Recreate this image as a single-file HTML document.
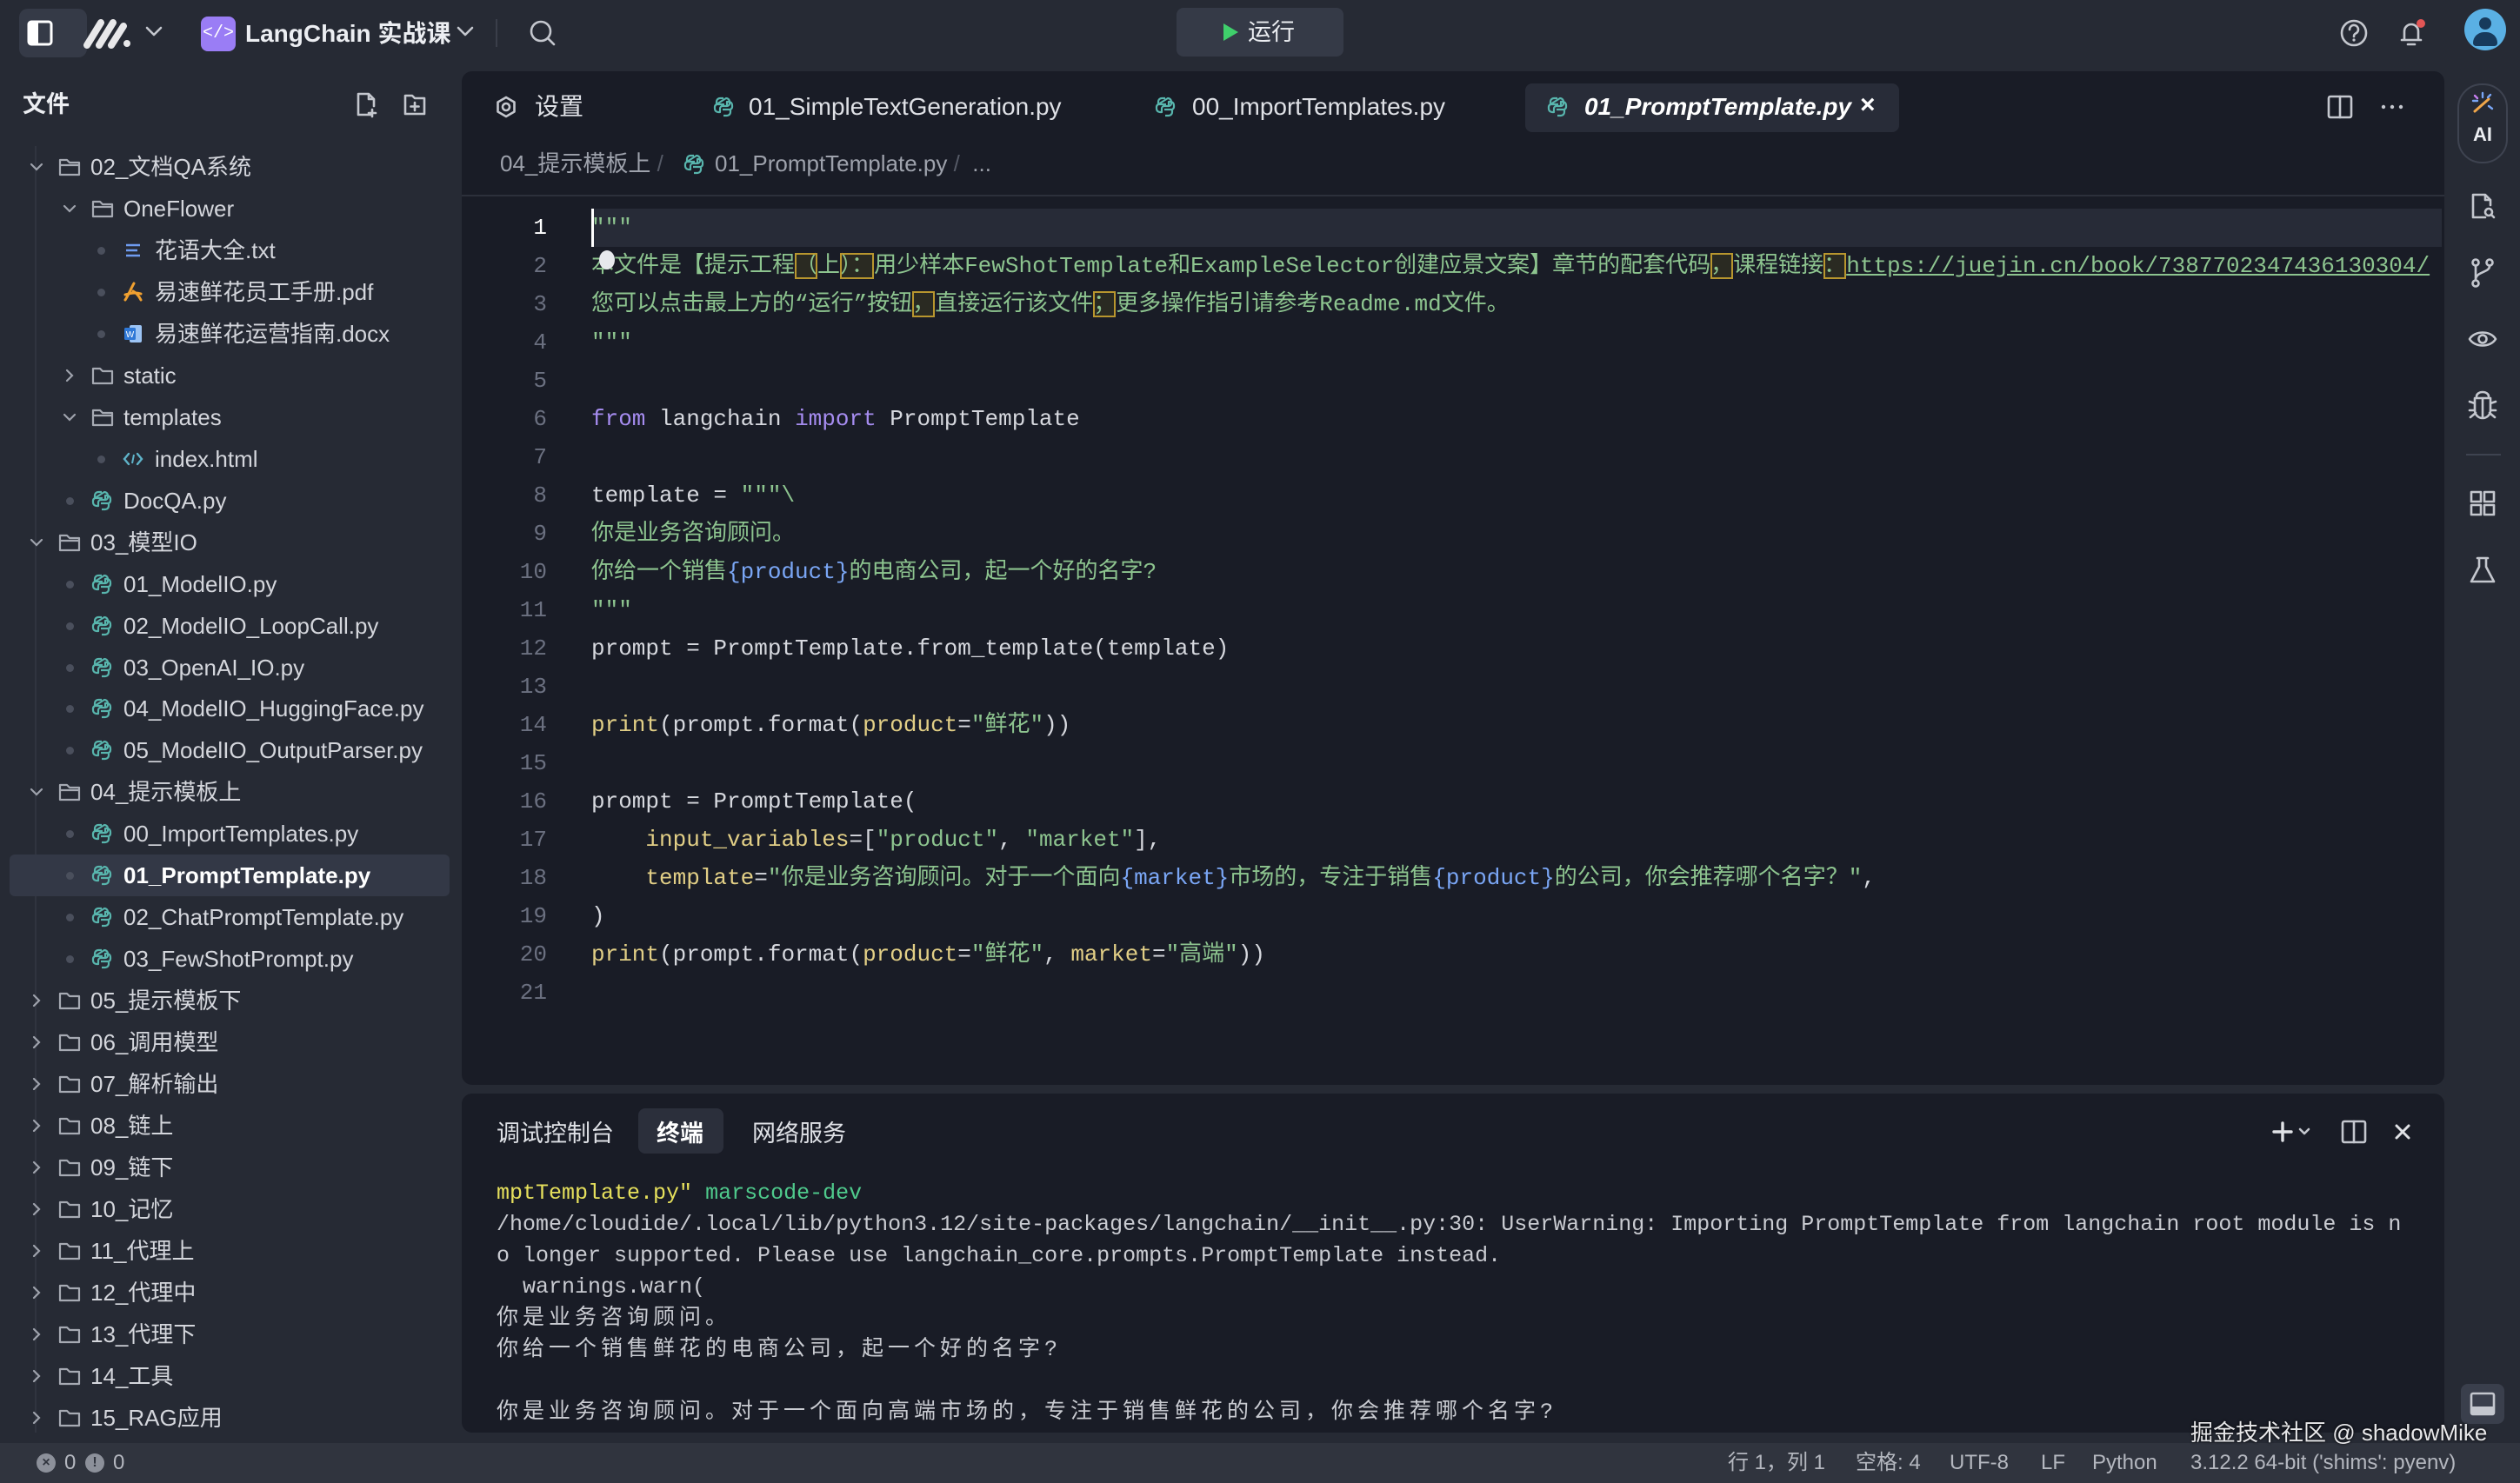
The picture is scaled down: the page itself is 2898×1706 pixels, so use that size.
<!DOCTYPE html>
<html><head><meta charset="utf-8">
<style>
*{margin:0;padding:0;box-sizing:border-box}
html,body{width:2898px;height:1706px;overflow:hidden;background:#262a34;font-family:"Liberation Sans","Noto Sans CJK SC",sans-serif;color:#d4d6dc}
.a{position:absolute}
.row{position:absolute;left:0;width:530px;height:48px;line-height:48px;font-size:26px;white-space:nowrap;color:#d4d6dc}
.editor{position:absolute;left:531px;top:82px;width:2280px;height:1166px;background:#191c26;border-radius:12px;overflow:hidden}
.code{position:absolute;left:0;top:0;font-family:"Liberation Mono","Noto Sans CJK SC",monospace;font-size:26px;line-height:44px;white-space:pre}
.ln{position:absolute;width:98px;text-align:right;color:#6b7080;font-family:"Liberation Mono",monospace;font-size:26px;line-height:44px}
.s{color:#8dc48f}.k{color:#a68cf0}.v{color:#7aa6f5}.y{color:#e2cf86}.w{color:#d6d8de}
.bx{outline:2px solid #b8962e;outline-offset:-2px;background:#2a2a22}
.term{position:absolute;left:531px;top:1258px;width:2280px;height:390px;background:#191c26;border-radius:12px;overflow:hidden}
.tl{position:absolute;left:40px;font-family:"Liberation Mono","Noto Sans CJK SC",monospace;font-size:25px;line-height:36px;white-space:pre;color:#c9cbd1}
.cj{letter-spacing:5px}
.st{position:absolute;top:1660px;font-size:24px;line-height:46px;color:#b4b7bf;white-space:nowrap}
.ic{stroke:#c4c7ce;fill:none;stroke-width:2.6;stroke-linecap:round;stroke-linejoin:round}
</style></head><body>

<!-- top bar -->
<div class="a" style="left:22px;top:10px;width:78px;height:56px;background:#353a47;border-radius:10px"></div>
<svg class="a" style="left:28px;top:20px" width="36" height="36" viewBox="0 0 36 36"><rect x="5" y="5" width="26" height="26" rx="3" fill="none" stroke="#fff" stroke-width="3"/><rect x="5" y="5" width="11" height="26" fill="#fff"/></svg>
<svg class="a" style="left:94px;top:20px" width="60" height="36" viewBox="0 0 60 36"><path d="M6 32 L22 6 M20 32 L36 6 M34 32 L48 10" stroke="#e8e8ea" stroke-width="8" stroke-linecap="round"/><circle cx="52" cy="30" r="4" fill="#e8e8ea"/></svg>
<svg class="a" style="left:166px;top:28px" width="22" height="16" viewBox="0 0 22 16"><path d="M3 4 L11 12 L19 4" class="ic"/></svg>
<div class="a" style="left:231px;top:19px;width:40px;height:40px;background:#9a7df5;border-radius:8px;color:#fff;font-size:20px;line-height:40px;text-align:center;font-family:'Liberation Mono',monospace">&lt;/&gt;</div>
<div class="a" style="left:282px;top:18px;font-size:28px;font-weight:bold;line-height:42px;color:#eceef2">LangChain 实战课</div>
<svg class="a" style="left:524px;top:28px" width="22" height="16" viewBox="0 0 22 16"><path d="M3 4 L11 12 L19 4" class="ic"/></svg>
<div class="a" style="left:570px;top:22px;width:2px;height:32px;background:#3a3e4a"></div>
<svg class="a" style="left:606px;top:20px" width="36" height="36" viewBox="0 0 36 36"><circle cx="16" cy="16" r="11" class="ic"/><path d="M24 24 L31 31" class="ic"/></svg>
<div class="a" style="left:1353px;top:9px;width:192px;height:56px;background:#353a47;border-radius:8px"></div>
<svg class="a" style="left:1405px;top:26px" width="20" height="22" viewBox="0 0 20 22"><path d="M2 1 L19 11 L2 21 Z" fill="#3fcf6b"/></svg>
<div class="a" style="left:1435px;top:15px;font-size:27px;line-height:44px;color:#eceef2">运行</div>
<svg class="a" style="left:2689px;top:20px" width="36" height="36" viewBox="0 0 36 36"><circle cx="18" cy="18" r="14" class="ic"/><path d="M13 14 a5 5 0 1 1 7 4.5 c-1.5 .8 -2 1.5 -2 3.5" class="ic"/><circle cx="18" cy="26" r="1.6" fill="#c4c7ce"/></svg>
<svg class="a" style="left:2754px;top:18px" width="40" height="40" viewBox="0 0 40 40"><path d="M8 28 h22 M11 28 v-10 a8 8 0 0 1 16 0 v10 M15 33 h8" class="ic"/><circle cx="30" cy="9" r="5" fill="#e25555"/></svg>
<div class="a" style="left:2834px;top:10px;width:48px;height:48px;border-radius:50%;background:#5ab0e4;overflow:hidden"><div class="a" style="left:17px;top:10px;width:14px;height:14px;border-radius:50%;background:#173a5c"></div><div class="a" style="left:10px;top:27px;width:28px;height:16px;border-radius:14px 14px 4px 4px;background:#173a5c"></div></div>

<!-- sidebar header -->
<div class="a" style="left:26px;top:100px;font-size:27px;font-weight:bold;line-height:40px;color:#eceef2">文件</div>
<svg class="a" style="left:406px;top:104px" width="30" height="32" viewBox="0 0 30 32"><path d="M20 28 H6 V4 H18 L24 10 V18 M18 4 V10 H24 M22 22 v8 M18 26 h8" class="ic"/></svg>
<svg class="a" style="left:462px;top:104px" width="30" height="32" viewBox="0 0 30 32"><path d="M4 6 H12 L15 9 H26 V27 H4 Z M15 14 v9 M10.5 18.5 h9" class="ic"/></svg>
<div class="a" style="left:40px;top:168px;width:2px;height:1480px;background:#30343f"></div>

<div id="tree"></div>

<!-- editor -->
<div class="editor">
  <svg class="a" style="left:38px;top:28px" width="26" height="26" viewBox="0 0 26 26"><circle cx="13" cy="13" r="4" class="ic" stroke-width="2.2"/><path d="M13 2 L22.5 7.5 V18.5 L13 24 L3.5 18.5 V7.5 Z" class="ic" stroke-width="2.2"/></svg>
  <div class="a" style="left:84px;top:20px;font-size:28px;line-height:42px;color:#dfe1e6">设置</div>
  <div class="a pyA" style="left:288px;top:28px"></div>
  <div class="a" style="left:330px;top:20px;font-size:28px;line-height:42px;color:#dfe1e6">01_SimpleTextGeneration.py</div>
  <div class="a pyA" style="left:796px;top:28px"></div>
  <div class="a" style="left:840px;top:20px;font-size:28px;line-height:42px;color:#dfe1e6">00_ImportTemplates.py</div>
  <div class="a" style="left:1223px;top:14px;width:430px;height:56px;background:#282c38;border-radius:8px"></div>
  <div class="a pyA" style="left:1247px;top:28px"></div>
  <div class="a" style="left:1291px;top:20px;font-size:28px;line-height:42px;color:#fff;font-weight:bold;font-style:italic">01_PromptTemplate.py</div>
  <div class="a" style="left:1608px;top:18px;font-size:30px;line-height:42px;color:#fff;font-weight:bold">×</div>
  <svg class="a" style="left:2144px;top:25px" width="32" height="32" viewBox="0 0 32 32"><rect x="3" y="4" width="26" height="24" rx="2" class="ic"/><path d="M16 4 V28" class="ic"/></svg>
  <svg class="a" style="left:2204px;top:25px" width="32" height="32" viewBox="0 0 32 32"><circle cx="6" cy="16" r="2.2" fill="#c4c7ce"/><circle cx="16" cy="16" r="2.2" fill="#c4c7ce"/><circle cx="26" cy="16" r="2.2" fill="#c4c7ce"/></svg>
  <div class="a" style="left:44px;top:86px;font-size:26px;line-height:40px;color:#9ea2ac;white-space:nowrap">04_提示模板上 <span style="color:#555a66">/</span></div>
  <div class="a pyA" style="left:254px;top:94px"></div>
  <div class="a" style="left:291px;top:86px;font-size:26px;line-height:40px;color:#9ea2ac;white-space:nowrap">01_PromptTemplate.py <span style="color:#555a66">/</span> &nbsp;...</div>
  <div class="a" style="left:0;top:142px;width:2280px;height:2px;background:#2c303b"></div>
  <div class="a" style="left:149px;top:158px;width:2128px;height:44px;background:#272b37"></div>
  <div class="a" style="left:149px;top:158px;width:3px;height:44px;background:#fff"></div>
  <div id="lnums"></div>
  <div class="code" style="left:149px;top:158px"><span class="s">"""</span>
<span class="s">本文件是【提示工程<span class="bx">（</span>上<span class="bx">）：</span>用少样本FewShotTemplate和ExampleSelector创建应景文案】章节的配套代码<span class="bx">，</span>课程链接<span class="bx">：</span><span style="text-decoration:underline">https://juejin.cn/book/7387702347436130304/</span></span>
<span class="s">您可以点击最上方的“运行”按钮<span class="bx">，</span>直接运行该文件<span class="bx">；</span>更多操作指引请参考Readme.md文件。</span>
<span class="s">"""</span>

<span class="k">from</span><span class="w"> langchain </span><span class="k">import</span><span class="w"> PromptTemplate</span>

<span class="w">template = </span><span class="s">"""\</span>
<span class="s">你是业务咨询顾问。</span>
<span class="s">你给一个销售<span class="v">{product}</span>的电商公司，起一个好的名字?</span>
<span class="s">"""</span>
<span class="w">prompt = PromptTemplate.from_template(template)</span>

<span class="y">print</span><span class="w">(prompt.format(</span><span class="y">product</span><span class="w">=</span><span class="s">"鲜花"</span><span class="w">))</span>

<span class="w">prompt = PromptTemplate(</span>
<span class="w">    </span><span class="y">input_variables</span><span class="w">=[</span><span class="s">"product"</span><span class="w">, </span><span class="s">"market"</span><span class="w">],</span>
<span class="w">    </span><span class="y">template</span><span class="w">=</span><span class="s">"你是业务咨询顾问。对于一个面向<span class="v">{market}</span>市场的，专注于销售<span class="v">{product}</span>的公司，你会推荐哪个名字？"</span><span class="w">,</span>
<span class="w">)</span>
<span class="y">print</span><span class="w">(prompt.format(</span><span class="y">product</span><span class="w">=</span><span class="s">"鲜花"</span><span class="w">, </span><span class="y">market</span><span class="w">=</span><span class="s">"高端"</span><span class="w">))</span></div>
  <div class="a" style="left:158px;top:206px;width:18px;height:22px;border-radius:50%;background:#e6e8ec"></div>
</div>

<!-- terminal -->
<div class="term">
  <div class="a" style="left:40px;top:26px;font-size:27px;line-height:40px;color:#dfe1e6">调试控制台</div>
  <div class="a" style="left:203px;top:17px;width:98px;height:52px;background:#2b2f3b;border-radius:8px"></div>
  <div class="a" style="left:224px;top:26px;font-size:27px;line-height:40px;color:#fff;font-weight:bold">终端</div>
  <div class="a" style="left:334px;top:26px;font-size:27px;line-height:40px;color:#dfe1e6">网络服务</div>
  <svg class="a" style="left:2082px;top:30px" width="50" height="28" viewBox="0 0 50 28"><path d="M12 4 V24 M2 14 H22" stroke="#e0e2e6" stroke-width="3.4" stroke-linecap="round"/><path d="M32 11 L37 16 L42 11" class="ic"/></svg>
  <svg class="a" style="left:2160px;top:28px" width="32" height="32" viewBox="0 0 32 32"><rect x="3" y="4" width="26" height="24" rx="2" class="ic"/><path d="M16 4 V28" class="ic"/></svg>
  <svg class="a" style="left:2220px;top:32px" width="24" height="24" viewBox="0 0 24 24"><path d="M5 5 L19 19 M19 5 L5 19" stroke="#e0e2e6" stroke-width="3" stroke-linecap="round"/></svg>
  <div class="tl" style="top:97px"><span style="color:#e6e05c">mptTemplate.py"</span> <span style="color:#4fca8c">marscode-dev</span></div>
  <div class="tl" style="top:133px">/home/cloudide/.local/lib/python3.12/site-packages/langchain/__init__.py:30: UserWarning: Importing PromptTemplate from langchain root module is n</div>
  <div class="tl" style="top:169px">o longer supported. Please use langchain_core.prompts.PromptTemplate instead.</div>
  <div class="tl" style="top:205px">  warnings.warn(</div>
  <div class="tl cj" style="top:241px">你是业务咨询顾问。</div>
  <div class="tl cj" style="top:277px">你给一个销售鲜花的电商公司，起一个好的名字?</div>
  <div class="tl cj" style="top:349px">你是业务咨询顾问。对于一个面向高端市场的，专注于销售鲜花的公司，你会推荐哪个名字?</div>
</div>

<!-- right activity bar -->
<div class="a" style="left:2826px;top:96px;width:58px;height:92px;border:2px solid #3e4350;border-radius:28px"></div>
<svg class="a" style="left:2840px;top:104px" width="30" height="30" viewBox="0 0 30 30"><path d="M6 24 L22 10" stroke="#f0a64a" stroke-width="3" stroke-linecap="round"/><path d="M15 3 v5 M4 12 h5 M22 18 l4 3 M24 5 l-3 3" stroke="#7aa6f5" stroke-width="2.4" stroke-linecap="round"/><path d="M6 6 l3 3" stroke="#c77ef0" stroke-width="2.4" stroke-linecap="round"/></svg>
<div class="a" style="left:2826px;top:142px;width:58px;text-align:center;font-size:22px;font-weight:bold;color:#eceef2">AI</div>
<svg class="a" style="left:2838px;top:220px" width="34" height="36" viewBox="0 0 34 36"><path d="M20 30 H6 V4 H20 L26 10 V16 M20 4 V10 H26" class="ic"/><circle cx="24" cy="24" r="4" class="ic"/><path d="M27 27 L30 30" class="ic"/></svg>
<svg class="a" style="left:2838px;top:296px" width="34" height="36" viewBox="0 0 34 36"><circle cx="9" cy="6" r="3.5" class="ic"/><circle cx="9" cy="30" r="3.5" class="ic"/><circle cx="25" cy="6" r="3.5" class="ic"/><path d="M9 10 V26 M25 10 C25 18 9 16 9 26" class="ic"/></svg>
<svg class="a" style="left:2836px;top:372px" width="38" height="36" viewBox="0 0 38 36"><path d="M4 18 C10 8 28 8 34 18 C28 28 10 28 4 18 Z" class="ic"/><circle cx="19" cy="18" r="4.5" class="ic"/></svg>
<svg class="a" style="left:2836px;top:448px" width="38" height="36" viewBox="0 0 38 36"><path d="M12 8 a7 5 0 0 1 14 0 M10 10 H28 V24 a9 9 0 0 1 -18 0 Z M19 10 V32 M4 14 L10 16 M34 14 L28 16 M4 24 H10 M34 24 H28 M5 32 L11 27 M33 32 L27 27" class="ic"/></svg>
<div class="a" style="left:2836px;top:522px;width:40px;height:2px;background:#3e4350"></div>
<svg class="a" style="left:2838px;top:562px" width="34" height="34" viewBox="0 0 34 34"><rect x="4" y="4" width="11" height="11" class="ic"/><rect x="19" y="4" width="11" height="11" class="ic"/><rect x="4" y="19" width="11" height="11" class="ic"/><rect x="19" y="19" width="11" height="11" class="ic"/></svg>
<svg class="a" style="left:2838px;top:638px" width="34" height="36" viewBox="0 0 34 36"><path d="M11 4 H23 M13 4 V14 L4 31 H30 L21 14 V4" class="ic"/></svg>
<div class="a" style="left:2830px;top:1592px;width:50px;height:46px;background:#3a3f4c;border-radius:8px"></div>
<svg class="a" style="left:2838px;top:1598px" width="34" height="34" viewBox="0 0 34 34"><rect x="4" y="5" width="26" height="24" rx="2" class="ic"/><rect x="4" y="20" width="26" height="9" fill="#c4c7ce"/></svg>

<!-- status bar -->
<div class="a" style="left:0;top:1660px;width:2898px;height:46px;background:#30343e"></div>
<div class="a" style="left:42px;top:1672px;width:22px;height:22px;border-radius:50%;background:#8c909a;color:#30343e;font-size:16px;line-height:22px;text-align:center;font-weight:bold">×</div>
<div class="st" style="left:74px">0</div>
<div class="a" style="left:98px;top:1672px;width:22px;height:22px;border-radius:50%;background:#8c909a;color:#30343e;font-size:16px;line-height:22px;text-align:center;font-weight:bold">!</div>
<div class="st" style="left:130px">0</div>
<div class="st" style="left:1987px">行 1，列 1</div>
<div class="st" style="left:2134px">空格: 4</div>
<div class="st" style="left:2242px">UTF-8</div>
<div class="st" style="left:2347px">LF</div>
<div class="st" style="left:2406px">Python</div>
<div class="st" style="left:2519px">3.12.2 64-bit ('shims': pyenv)</div>
<div class="a" style="left:2519px;top:1630px;font-size:26px;line-height:36px;color:#e8e8ea;white-space:nowrap;text-shadow:0 0 3px #000">掘金技术社区 @ shadowMike</div>

<script>
var py='<svg width="26" height="26" viewBox="0 0 26 26"><path d="M13 3 H9 a4 4 0 0 0 -4 4 V10 H14 M5 10 a4 4 0 0 0 -2 4 v1 a4 4 0 0 0 4 4 H9 V15 a3 3 0 0 1 3 -3 H17 a3 3 0 0 0 3 -3 V7 a4 4 0 0 0 -4 -4 Z M13 23 H17 a4 4 0 0 0 4 -4 V16 H12 M21 16 a4 4 0 0 0 2 -4 V11 a4 4 0 0 0 -4 -4 H17 V11" fill="none" stroke="#58b5ad" stroke-width="2.2" stroke-linejoin="round"/></svg>';
document.querySelectorAll('.pyA').forEach(function(e){e.innerHTML=py});
var fo='<svg width="28" height="26" viewBox="0 0 28 26"><path d="M3 5 H11 L14 8 H25 V22 H3 Z M3 11 H25" fill="none" stroke="#a6aab3" stroke-width="2.2" stroke-linejoin="round"/></svg>';
var fc='<svg width="28" height="26" viewBox="0 0 28 26"><path d="M3 5 H11 L14 8 H25 V22 H3 Z" fill="none" stroke="#a6aab3" stroke-width="2.2" stroke-linejoin="round"/></svg>';
var dn='<svg width="20" height="48" viewBox="0 0 20 48"><path d="M4 21 L10 27 L16 21" fill="none" stroke="#9ea2ac" stroke-width="2.2" stroke-linecap="round"/></svg>';
var rt='<svg width="20" height="48" viewBox="0 0 20 48"><path d="M7 18 L13 24 L7 30" fill="none" stroke="#9ea2ac" stroke-width="2.2" stroke-linecap="round"/></svg>';
var txt='<svg width="26" height="26" viewBox="0 0 26 26"><path d="M5 7 H21 M5 13 H18 M5 19 H21" stroke="#6f9cf0" stroke-width="2.6"/></svg>';
var pdf='<svg width="26" height="26" viewBox="0 0 26 26"><path d="M14 3 C10 10 8 16 4 22 M13 12 C17 14 20 18 22 22 M4 16 C10 14 16 13 22 15" fill="none" stroke="#f0a030" stroke-width="3" stroke-linecap="round"/></svg>';
var doc='<svg width="26" height="26" viewBox="0 0 26 26"><rect x="9" y="3" width="14" height="20" rx="2" fill="#9cc4f5"/><rect x="3" y="6" width="13" height="14" rx="1.5" fill="#2f78d6"/><text x="9.5" y="17" font-size="10" fill="#fff" text-anchor="middle" font-family="Liberation Sans">W</text></svg>';
var htm='<svg width="26" height="26" viewBox="0 0 26 26"><path d="M8 7 L3 13 L8 19 M18 7 L23 13 L18 19" fill="none" stroke="#5fb3c9" stroke-width="2.4" stroke-linecap="round"/><path d="M14 8 L12 18" stroke="#5fb3c9" stroke-width="2"/></svg>';
var rows=[
[0,'dn','fo','02_文档QA系统'],[1,'dn','fo','OneFlower'],[2,'dot',txt,'花语大全.txt'],[2,'dot',pdf,'易速鲜花员工手册.pdf'],[2,'dot',doc,'易速鲜花运营指南.docx'],
[1,'rt','fc','static'],[1,'dn','fo','templates'],[2,'dot',htm,'index.html'],[1,'dot','py','DocQA.py'],
[0,'dn','fo','03_模型IO'],[1,'dot','py','01_ModelIO.py'],[1,'dot','py','02_ModelIO_LoopCall.py'],[1,'dot','py','03_OpenAI_IO.py'],[1,'dot','py','04_ModelIO_HuggingFace.py'],[1,'dot','py','05_ModelIO_OutputParser.py'],
[0,'dn','fo','04_提示模板上'],[1,'dot','py','00_ImportTemplates.py'],[1,'dot','py','01_PromptTemplate.py',1],[1,'dot','py','02_ChatPromptTemplate.py'],[1,'dot','py','03_FewShotPrompt.py'],
[0,'rt','fc','05_提示模板下'],[0,'rt','fc','06_调用模型'],[0,'rt','fc','07_解析输出'],[0,'rt','fc','08_链上'],[0,'rt','fc','09_链下'],[0,'rt','fc','10_记忆'],[0,'rt','fc','11_代理上'],[0,'rt','fc','12_代理中'],[0,'rt','fc','13_代理下'],[0,'rt','fc','14_工具'],[0,'rt','fc','15_RAG应用']];
var h='';
rows.forEach(function(r,i){
 var top=168+i*47.96, L=r[0], sel=r[4];
 var base=L==0?32:(L==1?70:106);
 var icon=r[2]=='fo'?fo:r[2]=='fc'?fc:r[2]=='py'?py:r[2];
 h+='<div class="row" style="top:'+top+'px;'+(sel?'background:#333846;left:11px;width:506px;border-radius:6px;':'')+'">';
 var off=sel?-11:0;
 if(r[1]=='dn')h+='<div style="position:absolute;left:'+(base+off)+'px;top:0;line-height:0">'+dn+'</div>';
 else if(r[1]=='rt')h+='<div style="position:absolute;left:'+(base+off)+'px;top:0;line-height:0">'+rt+'</div>';
 else h+='<div style="position:absolute;left:'+(base+off+6)+'px;top:20px;width:9px;height:9px;border-radius:50%;background:#4a4f5c"></div>';
 h+='<div style="position:absolute;left:'+(base+off+34)+'px;top:11px;height:26px;line-height:0">'+icon+'</div>';
 h+='<div style="position:absolute;left:'+(base+off+72)+'px;top:0;'+(sel?'font-weight:bold;color:#fff;':'')+'">'+r[3]+'</div></div>';
});
document.getElementById('tree').innerHTML=h;
var n='';for(var i=1;i<=21;i++){n+='<div class="ln" style="left:0;top:'+(158+(i-1)*44)+'px;'+(i==1?'color:#fff':'')+'">'+i+'</div>';}
document.getElementById('lnums').innerHTML=n;
</script>
</body></html>
